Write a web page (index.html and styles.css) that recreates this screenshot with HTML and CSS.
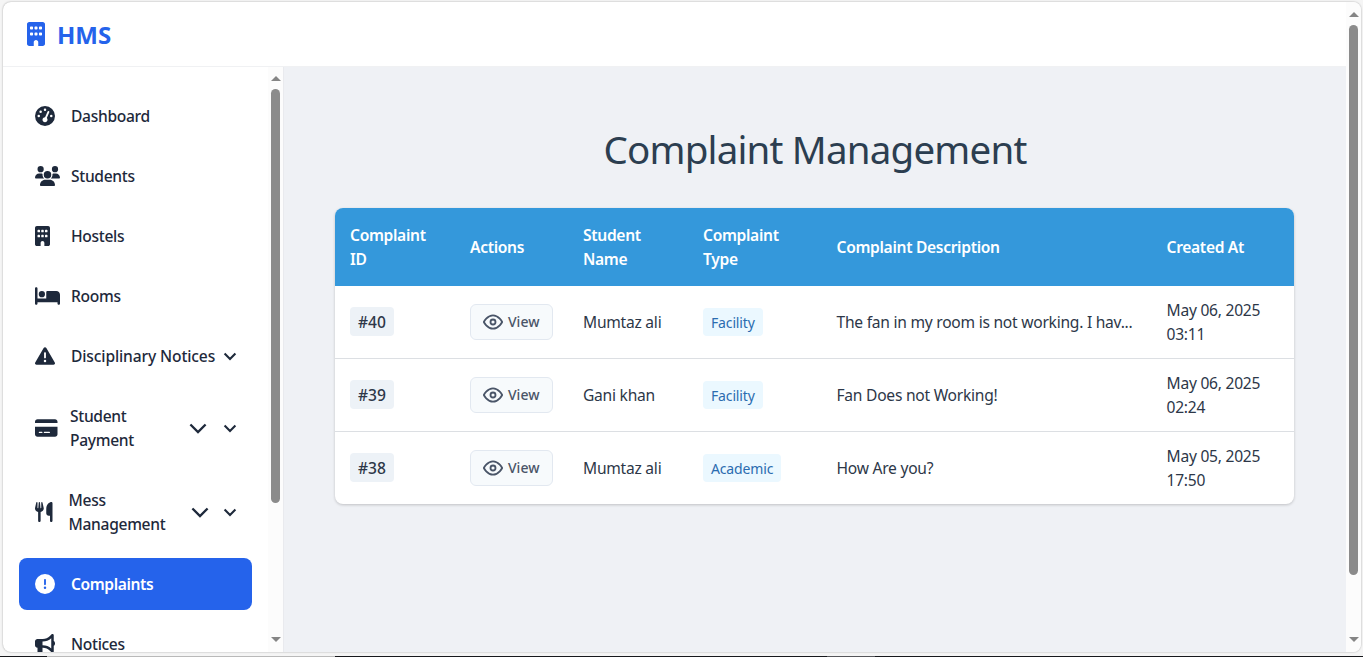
FILE: index.html
```html
<!DOCTYPE html>
<html lang="en">
<head>
<meta charset="utf-8">
<title>HMS - Complaint Management</title>
<link rel="stylesheet" href="styles.css">
</head>
<body>
<svg class="defs" aria-hidden="true">
  <symbol id="building" viewBox="0 0 384 512"><path d="M48 0C21.5 0 0 21.5 0 48V464c0 26.5 21.5 48 48 48h96V432c0-26.5 21.5-48 48-48s48 21.5 48 48v80h96c26.5 0 48-21.5 48-48V48c0-26.5-21.5-48-48-48H48zM64 240c0-8.800 7.200-16 16-16h32c8.800 0 16 7.200 16 16v32c0 8.800-7.200 16-16 16H80c-8.800 0-16-7.200-16-16V240zm112-16h32c8.800 0 16 7.200 16 16v32c0 8.800-7.200 16-16 16H176c-8.800 0-16-7.200-16-16V240c0-8.800 7.200-16 16-16zm80 16c0-8.800 7.200-16 16-16h32c8.800 0 16 7.200 16 16v32c0 8.800-7.200 16-16 16H272c-8.800 0-16-7.200-16-16V240zM80 96h32c8.800 0 16 7.200 16 16v32c0 8.800-7.200 16-16 16H80c-8.800 0-16-7.200-16-16V112c0-8.800 7.200-16 16-16zm80 16c0-8.800 7.200-16 16-16h32c8.800 0 16 7.200 16 16v32c0 8.800-7.200 16-16 16H176c-8.800 0-16-7.200-16-16V112zM272 96h32c8.800 0 16 7.200 16 16v32c0 8.800-7.200 16-16 16H272c-8.800 0-16-7.200-16-16V112c0-8.800 7.200-16 16-16z"/></symbol>
  <symbol id="chevron" viewBox="0 0 24 24"><path d="M5.500 9l6.500 6.500 6.500-6.500" fill="none" stroke="currentColor"/></symbol>
  <symbol id="eye" viewBox="0 0 24 24"><g fill="none" stroke="currentColor" stroke-width="2.200" stroke-linecap="round" stroke-linejoin="round"><path d="M1 12s4-8 11-8 11 8 11 8-4 8-11 8-11-8-11-8z"/><circle cx="12" cy="12" r="3"/></g></symbol>
</svg>
<div class="window">
  <div class="page">
    <header class="topbar">
      <svg class="logo-icon" viewBox="0 0 384 512"><use href="#building"/></svg>
      <span class="logo-text">HMS</span>
    </header>
    <div class="body">
      <aside class="sidebar">
        <nav class="menu">
          <a class="item"><svg class="icon" viewBox="0 0 512 512" width="20"><path d="M0 256a256 256 0 1 1 512 0A256 256 0 1 1 0 256zM288 96a32 32 0 1 0 -64 0 32 32 0 1 0 64 0zM256 416c35.300 0 64-28.700 64-64c0-17.400-6.900-33.100-18.100-44.600L366 161.700c5.300-12.100-.2-26.300-12.300-31.600s-26.300 .2-31.600 12.300L257.900 288c-.6 0-1.300 0-1.900 0c-35.300 0-64 28.700-64 64s28.700 64 64 64zM176 144a32 32 0 1 0 -64 0 32 32 0 1 0 64 0zM96 288a32 32 0 1 0 0-64 32 32 0 1 0 0 64zm352-32a32 32 0 1 0 -64 0 32 32 0 1 0 64 0z"/></svg><span class="label">Dashboard</span></a>
          <a class="item"><svg class="icon" viewBox="0 0 640 512" width="25"><path d="M144 0a80 80 0 1 1 0 160A80 80 0 1 1 144 0zM512 0a80 80 0 1 1 0 160A80 80 0 1 1 512 0zM0 298.700C0 239.800 47.800 192 106.700 192h42.700c15.900 0 31 3.500 44.600 9.700c-1.300 7.200-1.900 14.700-1.900 22.300c0 38.200 16.800 72.500 43.300 96c-.2 0-.4 0-.7 0H21.300C9.600 320 0 310.400 0 298.700zM405.300 320c-.2 0-.4 0-.7 0c26.600-23.500 43.300-57.800 43.300-96c0-7.600-.7-15-1.900-22.300c13.600-6.300 28.700-9.700 44.600-9.700h42.700C592.200 192 640 239.800 640 298.700c0 11.800-9.600 21.300-21.300 21.300H405.300zM224 224a96 96 0 1 1 192 0 96 96 0 1 1 -192 0zM128 485.300C128 411.700 187.700 352 261.300 352H378.700C452.300 352 512 411.700 512 485.300c0 14.700-11.900 26.700-26.700 26.700H154.700c-14.700 0-26.700-11.900-26.700-26.700z"/></svg><span class="label">Students</span></a>
          <a class="item"><svg class="icon" viewBox="0 0 384 512" width="15"><use href="#building"/></svg><span class="label">Hostels</span></a>
          <a class="item"><svg class="icon" viewBox="0 0 640 512" width="25"><path d="M32 32c17.700 0 32 14.300 32 32V320H288V160c0-17.700 14.300-32 32-32H544c53 0 96 43 96 96V448c0 17.700-14.300 32-32 32s-32-14.300-32-32V416H352 320 64v32c0 17.700-14.300 32-32 32s-32-14.300-32-32V64C0 46.300 14.300 32 32 32zm144 96a80 80 0 1 1 0 160 80 80 0 1 1 0-160z"/></svg><span class="label">Rooms</span></a>
          <a class="item"><svg class="icon" viewBox="0 0 512 512" width="20"><path d="M256 32c14.200 0 27.300 7.500 34.500 19.800l216 368c7.300 12.400 7.300 27.700 .2 40.100S486.300 480 472 480H40c-14.300 0-27.600-7.700-34.700-20.100s-7-27.800 .2-40.100l216-368C228.700 39.500 241.800 32 256 32zm0 128c-13.300 0-24 10.700-24 24V296c0 13.300 10.700 24 24 24s24-10.700 24-24V184c0-13.300-10.700-24-24-24zm32 224a32 32 0 1 0 -64 0 32 32 0 1 0 64 0z"/></svg><span class="label spaced">Disciplinary Notices</span><svg class="arrow"><use href="#chevron"/></svg></a>
          <a class="item"><svg class="icon" viewBox="0 0 576 512" width="22.500"><path d="M64 32C28.700 32 0 60.700 0 96v32H576V96c0-35.300-28.700-64-64-64H64zM576 224H0V416c0 35.300 28.700 64 64 64H512c35.300 0 64-28.700 64-64V224zM112 352h64c8.800 0 16 7.200 16 16s-7.200 16-16 16H112c-8.800 0-16-7.200-16-16s7.200-16 16-16zm112 16c0-8.800 7.200-16 16-16H368c8.800 0 16 7.200 16 16s-7.200 16-16 16H240c-8.800 0-16-7.200-16-16z"/></svg><span class="label">Student<br>Payment</span><svg class="arrow-lg"><use href="#chevron"/></svg><svg class="arrow"><use href="#chevron"/></svg></a>
          <a class="item mess"><svg class="icon" viewBox="0 0 448 512" width="17.500"><path d="M416 0C400 0 288 32 288 176V288c0 35.300 28.700 64 64 64h32V480c0 17.700 14.300 32 32 32s32-14.300 32-32V352 240 32c0-17.700-14.300-32-32-32zM64 16C64 7.800 57.900 1 49.700 .1S34.200 4.600 32.400 12.500L2.100 148.800C.7 155.100 0 161.500 0 167.900c0 45.900 35.100 83.600 80 87.700V480c0 17.700 14.300 32 32 32s32-14.300 32-32V255.600c44.900-4.100 80-41.800 80-87.700c0-6.400-.7-12.800-2.100-19.100L191.600 12.500c-1.800-8-9.300-13.300-17.400-12.400S160 7.800 160 16V150.200c0 5.400-4.400 9.800-9.800 9.800c-5.100 0-9.300-3.900-9.800-9L127.900 14.600C127.200 6.300 120.300 0 112 0s-15.200 6.300-15.900 14.600L83.700 151c-.5 5.100-4.700 9-9.800 9c-5.400 0-9.800-4.400-9.800-9.800V16z"/></svg><span class="label">Mess<br>Management</span><svg class="arrow-lg"><use href="#chevron"/></svg><svg class="arrow"><use href="#chevron"/></svg></a>
          <a class="item active"><svg class="icon" viewBox="0 0 512 512" width="20"><path d="M256 512A256 256 0 1 0 256 0a256 256 0 1 0 0 512zm0-384c13.300 0 24 10.700 24 24V264c0 13.300-10.700 24-24 24s-24-10.700-24-24V152c0-13.300 10.700-24 24-24zM224 352a32 32 0 1 1 64 0 32 32 0 1 1 -64 0z"/></svg><span class="label">Complaints</span></a>
          <a class="item"><svg class="icon" viewBox="0 0 512 512" width="20"><path d="M480 32c0-12.900-7.800-24.600-19.800-29.600s-25.700-2.200-34.900 6.900L381.700 53c-48 48-113.100 75-181 75H192 160 64c-35.300 0-64 28.700-64 64v96c0 35.300 28.700 64 64 64l0 128c0 17.700 14.300 32 32 32h64c17.700 0 32-14.300 32-32V352l8.700 0c67.900 0 133 27 181 75l43.600 43.600c9.200 9.200 22.900 11.900 34.900 6.900s19.800-16.600 19.800-29.600V300.400c18.600-8.800 32-32.500 32-60.400s-13.400-51.600-32-60.400V32zm-64 76.700V240 371.300C357.200 317.800 280.500 288 200.700 288H192V192h8.700c79.800 0 156.500-29.800 215.300-83.300z"/></svg><span class="label">Notices</span></a>
        </nav>
        <div class="scrollbar side-scroll"><i class="up"></i><i class="thumb"></i><i class="down"></i></div>
      </aside>
      <main class="content">
        <h1 class="title">Complaint Management</h1>
        <table class="complaints">
          <colgroup><col class="c-id"><col class="c-act"><col class="c-name"><col class="c-type"><col class="c-desc"><col class="c-date"></colgroup>
          <thead>
            <tr><th>Complaint<br>ID</th><th>Actions</th><th>Student<br>Name</th><th>Complaint<br>Type</th><th>Complaint Description</th><th>Created At</th></tr>
          </thead>
          <tbody>
            <tr><td><span class="num">#40</span></td><td><button class="view"><svg class="eye"><use href="#eye"/></svg><span>View</span></button></td><td>Mumtaz ali</td><td><span class="tag">Facility</span></td><td>The fan in my room is not working. I hav...</td><td>May 06, 2025<br>03:11</td></tr>
            <tr><td><span class="num">#39</span></td><td><button class="view"><svg class="eye"><use href="#eye"/></svg><span>View</span></button></td><td>Gani khan</td><td><span class="tag">Facility</span></td><td>Fan Does not Working!</td><td>May 06, 2025<br>02:24</td></tr>
            <tr><td><span class="num">#38</span></td><td><button class="view"><svg class="eye"><use href="#eye"/></svg><span>View</span></button></td><td>Mumtaz ali</td><td><span class="tag">Academic</span></td><td>How Are you?</td><td>May 05, 2025<br>17:50</td></tr>
          </tbody>
        </table>
      </main>
    </div>
  </div>
  <div class="scrollbar page-scroll"><i class="up"></i><i class="thumb"></i><i class="down"></i></div>
</div>
<div class="taskline"></div>
</body>
</html>
```

FILE: styles.css
```css
* { box-sizing: border-box; }
body {
  margin: 0;
  height: 657px;
  display: flex;
  flex-direction: column;
  overflow: hidden;
  background: #f5f5f5;
  font: 15.6px/24px "Noto Sans", "Open Sans", sans-serif;
  letter-spacing: -.25px;
  color: #2d3748;
}
.defs { display: none; }
svg { display: block; flex: none; fill: currentColor; }
.window {
  flex: none;
  display: flex;
  width: 1358px;
  height: 650px;
  margin: 2px 0 4px 3px;
  border-radius: 8px;
  overflow: hidden;
  background: #fff;
  box-shadow: 0 0 2px rgba(0, 0, 0, .35);
}
.taskline {
  flex: none;
  height: 1px;
  background: linear-gradient(90deg, #17181c 47px, #b9b9b9 47px, #b9b9b9 335px, #17181c 335px, #17181c 827px, #55565a 827px, #55565a 875px, #17181c 875px);
}
.page { width: 1343px; display: flex; flex-direction: column; }
.topbar {
  height: 64px;
  flex: none;
  display: flex;
  align-items: center;
  gap: 12px;
  padding-left: 24px;
  color: #2563eb;
}
.logo-icon { width: 18px; height: 24px; }
.logo-text { font-size: 24px; line-height: 32px; font-weight: 700; letter-spacing: 0; padding-top: 2px; }
.body { flex: 1; display: flex; min-height: 0; border-top: 1px solid #f0f1f3; }
.sidebar { width: 281px; flex: none; display: flex; overflow: hidden; border-right: 1px solid #e9eaee; }
.menu {
  width: 265px;
  flex: none;
  display: flex;
  flex-direction: column;
  gap: 8px;
  padding: 23px 16px 0;
}
.item {
  flex: none;
  display: flex;
  align-items: center;
  padding: 14px 16px;
  border-radius: 8px;
  color: #1e293b;
  font-weight: 500;
  letter-spacing: -.32px;
}
.active { background: #2563eb; color: #fff; font-weight: 600; letter-spacing: -.4px; }
.icon { height: 20px; margin-bottom: 1px; }
.label { white-space: nowrap; }
.spaced { letter-spacing: -.13px; }
.icon + .label { margin-left: 16px; }
.icon[width="25"] + .label { margin-left: 11px; }
.icon[width="15"] + .label { margin-left: 21px; }
.icon[width="22.500"] + .label { margin-left: 12.500px; }
.arrow { width: 20px; height: 20px; margin-left: auto; margin-right: -4px; stroke-width: 2.5px; }
.arrow-lg { width: 28px; height: 28px; margin-left: auto; stroke-width: 2px; }
.arrow-lg + .arrow { margin-left: 8px; }
.mess .arrow-lg + .arrow { margin-left: 6px; }
.scrollbar {
  width: 15px;
  flex: none;
  display: flex;
  flex-direction: column;
  align-items: center;
  background: #fcfcfc;
}
.up, .down { border: 5px solid transparent; width: 0; height: 0; }
.up { border-top: 0; border-bottom-color: #858585; }
.down { border-bottom: 0; border-top-color: #858585; margin-top: auto; }
.thumb { width: 9px; border-radius: 5px; background: #8b8b8b; }
.side-scroll { padding: 9px 0 10px 0; }
.side-scroll .thumb { height: 414px; margin-top: 8px; }
.page-scroll { padding: 10px 0 10px; }
.page-scroll .thumb { height: 550px; margin-top: 8px; }
.content { flex: 1; background: #eff1f5; padding: 59px 51px 0; }
.title {
  margin: 0 0 34px;
  height: 48px;
  font-size: 38.5px;
  line-height: 47px;
  font-weight: 400;
  letter-spacing: -.8px;
  text-align: center;
  color: #2c3e50;
}
.complaints {
  width: 959px;
  table-layout: fixed;
  border-collapse: separate;
  border-spacing: 0;
  border-radius: 8px;
  overflow: hidden;
  background: #fff;
  box-shadow: 0 1px 3px rgba(0, 0, 0, .2);
}
.c-id { width: 120px; }
.c-act { width: 113px; }
.c-name { width: 120px; }
.c-type { width: 133.500px; }
.c-desc { width: 330px; }
th, td { padding: 0 15px; text-align: left; vertical-align: middle; white-space: nowrap; }
th { height: 78px; background: #3498db; color: #fff; font-weight: 600; letter-spacing: -.32px; }
td { height: 73px; border-bottom: 1px solid #dcdfe3; }
tbody tr:last-child td { height: 72px; border-bottom: 0; }
.num {
  display: block;
  width: fit-content;
  margin-top: -1px;
  padding: 3px 8px 2px;
  border-radius: 4px;
  background: #edf2f7;
  font-weight: 500;
  letter-spacing: 0;
}
.view {
  display: flex;
  align-items: center;
  gap: 5px;
  width: 83px;
  height: 36px;
  padding: 0 0 0 12px;
  border: 1px solid #e2e8f0;
  border-radius: 6px;
  background: #f7fafc;
  color: #4a5568;
  font: 500 14px/20px "Noto Sans", sans-serif;
}
.eye { width: 20px; height: 20px; }
.tag {
  display: inline-block;
  padding: 3px 8px 1px;
  border-radius: 4px;
  background: #ebf8ff;
  color: #2b6cb0;
  font-size: 14px;
  letter-spacing: -.15px;
}
```
